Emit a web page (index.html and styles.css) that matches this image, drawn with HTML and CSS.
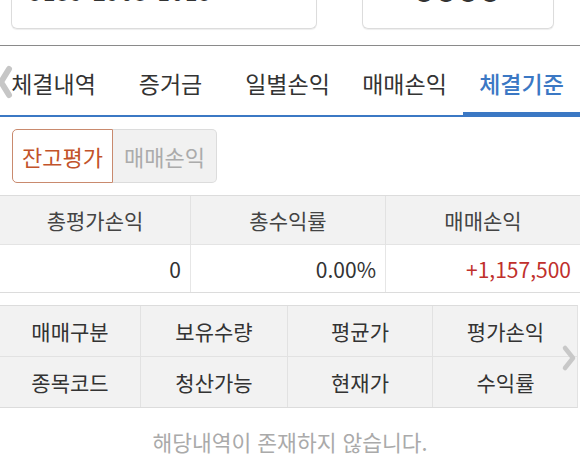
FILE: index.html
```html
<!DOCTYPE html>
<html lang="ko">
<head>
<meta charset="utf-8">
<link rel="stylesheet" href="styles.css">
</head>
<body>
<div class="page">
  <div class="fields">
    <div class="field field-account">5139-2903-1015</div>
    <div class="field field-pw">●●●●</div>
  </div>
  <div class="divider"></div>
  <div class="tabs-wrap">
    <div class="tabs">
      <div class="tab">체결내역</div>
      <div class="tab">증거금</div>
      <div class="tab">일별손익</div>
      <div class="tab">매매손익</div>
      <div class="tab active">체결기준</div>
    </div>
    <svg class="chev-left" width="16" height="34" viewBox="0 0 16 34"><path d="M12 4 L4 17 L12 30" fill="none" stroke="#c6c6c6" stroke-width="6" stroke-linecap="round" stroke-linejoin="round"/></svg>
  </div>
  <div class="toggle">
    <div class="tbtn on">잔고평가</div>
    <div class="tbtn off">매매손익</div>
  </div>
  <div class="summary">
    <div class="sh">총평가손익</div>
    <div class="sh">총수익률</div>
    <div class="sh">매매손익</div>
    <div class="sd">0</div>
    <div class="sd">0.00%</div>
    <div class="sd red">+1,157,500</div>
  </div>
  <div class="grid-wrap">
    <div class="grid">
      <div class="gc">매매구분</div>
      <div class="gc">보유수량</div>
      <div class="gc">평균가</div>
      <div class="gc">평가손익</div>
      <div class="gc">종목코드</div>
      <div class="gc">청산가능</div>
      <div class="gc">현재가</div>
      <div class="gc">수익률</div>
    </div>
    <svg class="chev-right" width="16" height="28" viewBox="0 0 16 28"><path d="M4 4 L12 14 L4 24" fill="none" stroke="#c8c8c8" stroke-width="4.5" stroke-linecap="round" stroke-linejoin="round"/></svg>
  </div>
  <div class="empty">해당내역이 존재하지 않습니다.</div>
</div>
</body>
</html>
```

FILE: styles.css
```css
html, body {
  margin: 0;
  padding: 0;
  background: #fff;
}
body {
  width: 580px;
  height: 466px;
  overflow: hidden;
  font-family: "Noto Sans CJK KR", "Noto Sans", sans-serif;
  color: #333;
}
.page {
  width: 580px;
}
.fields {
  display: flex;
  padding-left: 11px;
  gap: 45px;
  margin-top: -20px;
}
.field {
  height: 49px;
  box-sizing: border-box;
  border: 1px solid #dcdcdc;
  border-top: none;
  border-radius: 0 0 6px 6px;
  font-size: 23px;
  line-height: 23px;
  color: #333;
  box-shadow: 0 1px 1px #eee;
}
.field-account {
  width: 306px;
  padding: 0 0 0 17px;
  letter-spacing: 1px;
}
.field-pw {
  width: 192px;
  text-align: center;
  padding-top: 1px;
  letter-spacing: 2px;
  font-size: 20px;
}
.divider {
  margin-top: 16px;
  height: 1px;
  background: #8a8a8a;
}
.tabs-wrap {
  position: relative;
  border-bottom: 2px solid #3b78c4;
}
.tabs {
  display: grid;
  grid-template-columns: repeat(5, 117px);
  margin-left: -5px;
}
.tab {
  height: 69px;
  box-sizing: border-box;
  padding-top: 4px;
  display: flex;
  align-items: center;
  justify-content: center;
  font-size: 23px;
  color: #333;
}
.tab.active {
  color: #3b78c4;
  font-weight: 500;
  box-shadow: inset 0 -3px 0 #3b78c4;
}
.chev-left {
  position: absolute;
  left: -3px;
  top: 19px;
}
.toggle {
  display: flex;
  margin: 12px 0 0 12px;
}
.tbtn {
  height: 54px;
  box-sizing: border-box;
  display: flex;
  align-items: center;
  justify-content: center;
  font-size: 22px;
}
.tbtn.on {
  width: 101px;
  border: 1px solid #c98a6e;
  border-radius: 5px 0 0 5px;
  color: #c2532a;
  background: #fff;
}
.tbtn.off {
  width: 104px;
  border: 1px solid #dcdcdc;
  border-left: none;
  border-radius: 0 5px 5px 0;
  color: #ababab;
  background: #f1f1f1;
}
.summary {
  margin-top: 12px;
  display: grid;
  grid-template-columns: 190px 195px 195px;
  border-top: 1px solid #dcdcdc;
  border-bottom: 1px solid #dcdcdc;
}
.sh {
  height: 48px;
  background: #f2f2f2;
  display: flex;
  align-items: center;
  justify-content: center;
  font-size: 21px;
  color: #444;
  border-bottom: 1px solid #e4e4e4;
  border-left: 1px solid #e2e2e2;
}
.sd {
  height: 47px;
  display: flex;
  align-items: center;
  justify-content: flex-end;
  padding-right: 9px;
  font-size: 21px;
  color: #333;
  border-left: 1px solid #e6e6e6;
}
.sh:nth-child(1), .sd:nth-child(4) {
  border-left: none;
}
.sd.red {
  color: #c0302c;
}
.grid-wrap {
  position: relative;
  margin-top: 12px;
}
.grid {
  width: 578px;
  display: grid;
  grid-template-columns: 140px 147px 145px 146px;
  border-top: 1px solid #dcdcdc;
  border-bottom: 1px solid #dcdcdc;
  border-right: 1px solid #e2e2e2;
  box-sizing: border-box;
  background: #f2f2f2;
}
.gc {
  height: 50px;
  display: flex;
  align-items: center;
  justify-content: center;
  font-size: 21px;
  color: #333;
  border-left: 1px solid #e2e2e2;
}
.gc:nth-child(1), .gc:nth-child(5) {
  border-left: none;
}
.gc:nth-child(-n+4) {
  border-bottom: 1px solid #e2e2e2;
}
.chev-right {
  position: absolute;
  left: 561px;
  top: 39px;
}
.empty {
  margin-top: 20px;
  text-align: center;
  font-size: 21.5px;
  color: #aaa;
  line-height: 28px;
}
```
